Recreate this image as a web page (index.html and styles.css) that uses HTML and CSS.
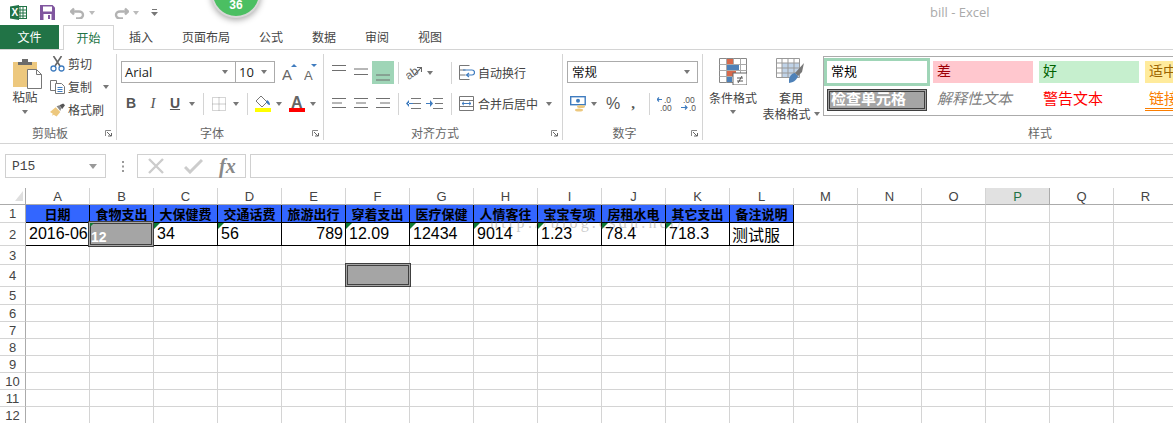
FILE: index.html
```html
<!DOCTYPE html>
<html lang="zh-CN">
<head>
<meta charset="utf-8">
<title>bill - Excel</title>
<link rel="stylesheet" href="styles.css">
</head>
<body>
<div class="app">
  <header class="titlebar">
    <svg class="qi-excel" width="17" height="15" viewBox="0 0 17 15"><rect x="6" y="1.500" width="10.500" height="12" fill="#fff" stroke="#217346"/><path d="M10 2v11M13 2v11M7 5h9M7 8h9M7 11h9" stroke="#217346"/><path d="M0 1.500 9 0v15L0 13.500z" fill="#217346"/><text x="1.500" y="11" class="qi-x">X</text></svg>
    <svg class="qi-save" width="15" height="15" viewBox="0 0 15 15"><path d="M0 0h12.500L15 2.500V15H0z" fill="#80569f"/><rect x="3" y="1.500" width="9" height="5" fill="#fff"/><rect x="3.500" y="9" width="8" height="6" fill="#fff"/><rect x="8" y="10" width="2" height="4" fill="#80569f"/></svg>
    <svg class="qi-undo" width="15" height="13" viewBox="0 0 15 13"><path d="M4 2.500 1 5.500l3 3M1.500 5.500H9a4 3.500 0 0 1 0 7H6" fill="none" stroke="#b3b3b3" stroke-width="2.400"/></svg>
    <i class="caret light qi-c1"></i>
    <svg class="qi-redo" width="15" height="13" viewBox="0 0 15 13"><path d="M11 2.500l3 3-3 3M13.500 5.500H6a4 3.500 0 0 0 0 7h3" fill="none" stroke="#b3b3b3" stroke-width="2.400"/></svg>
    <i class="caret light qi-c2"></i>
    <svg class="qi-more" width="7" height="8" viewBox="0 0 7 8"><path d="M1 .500h5" stroke="#777"/><path d="M0 3h7L3.500 7z" fill="#777"/></svg>
    <span class="doc-title">bill - Excel</span>
  </header>
  <div class="badge"><span>36</span></div>

  <nav class="tabs">
    <span class="tab-file">文件</span>
    <span class="tab-active">开始</span>
    <span class="tab first">插入</span>
    <span class="tab">页面布局</span>
    <span class="tab">公式</span>
    <span class="tab">数据</span>
    <span class="tab">审阅</span>
    <span class="tab">视图</span>
  </nav>

  <section class="ribbon">
    <div class="group g-clip">
      <div class="group-body clip-body">
        <div class="paste">
          <svg class="paste-ic" width="30" height="31" viewBox="0 0 30 31"><rect x="0" y="4" width="24" height="25" fill="#edc87e"/><path d="M5 4h14v3H5zM9 1h6v3H9z" fill="#6b6b6b"/><path d="M14.500 11.500h9l5 5v14h-14z" fill="#fff" stroke="#777"/><path d="M23.500 11.500v5h5" fill="none" stroke="#777"/></svg>
          <span class="paste-label">粘贴</span>
          <i class="caret paste-caret"></i>
        </div>
        <div class="clip-list">
          <div class="clip-item"><svg width="14" height="16" viewBox="0 0 14 16"><path d="M3 0l6.500 10M11 0 4.500 10" stroke="#666" stroke-width="1.600"/><circle cx="3" cy="12.500" r="2.500" fill="none" stroke="#3f7cbf" stroke-width="1.300"/><circle cx="11" cy="12.500" r="2.500" fill="none" stroke="#3f7cbf" stroke-width="1.300"/></svg><span>剪切</span></div>
          <div class="clip-item"><svg width="15" height="14" viewBox="0 0 15 14"><path d="M.5.500h6v10h-6z" fill="#fff" stroke="#777"/><path d="M5.500 3.500h6l3 3v7h-9z" fill="#fff" stroke="#777"/><path d="M7.500 7.500h5M7.500 9.500h5M7.500 11.500h5" stroke="#3f7cbf"/></svg><span>复制</span><i class="caret copy-caret"></i></div>
          <div class="clip-item"><svg width="16" height="14" viewBox="0 0 16 14"><path d="M0 9 6 4l5 5-4 5-3-2-2 1 1-2z" fill="#edc87e"/><path d="M7 3l3-1 2 3-1 3z" fill="#888"/><path d="M10 2l4-2 2 2-3 4z" fill="#555"/></svg><span>格式刷</span></div>
        </div>
      </div>
      <div class="group-label"><span>剪贴板</span><svg class="launcher" width="7" height="7" viewBox="0 0 7 7"><path d="M.5 6V.5H6" fill="none" stroke="#888"/><path d="M2 2l4 4M3 6h3.500V3" fill="none" stroke="#666"/></svg></div>
    </div>

    <div class="group g-font">
      <div class="group-body">
        <div class="row r-font-1">
          <div class="select sel-font"><span class="sel-text">Arial</span><i class="caret"></i></div>
          <div class="select sel-size"><span class="sel-text">10</span><i class="caret"></i></div>
          <svg class="grow" width="15" height="19" viewBox="0 0 15 19"><text x="0" y="17" class="fa big">A</text><path d="M9 4l3-3 3 3z" fill="#3f7cbf"/></svg>
          <svg class="shrink" width="13" height="19" viewBox="0 0 13 19"><text x="0" y="17" class="fa small">A</text><path d="M7 1h6l-3 3z" fill="#3f7cbf"/></svg>
        </div>
        <div class="row r-font-2">
          <span class="fmt fmt-b">B</span>
          <span class="fmt fmt-i">I</span>
          <span class="fmt fmt-u">U</span>
          <span class="slot-caret"><i class="caret"></i></span>
          <i class="sep s-a"></i>
          <span class="fmt s-border"><svg width="14" height="14" viewBox="0 0 14 14"><path d="M.5.500h13v13H.5z" fill="none" stroke="#aaa" stroke-dasharray="1 1"/><path d="M7 .5v13M.5 7h13" stroke="#999" stroke-dasharray="1 1"/></svg></span>
          <span class="slot-caret"><i class="caret"></i></span>
          <i class="sep s-b"></i>
          <svg class="s-fill" width="16" height="17" viewBox="0 0 16 17"><path d="M6 1l6 6-5 5-6-6z" fill="#fff" stroke="#777"/><path d="M12 5c2 1 3 3 3 5-2 0-3-2-4-3z" fill="#3f7cbf"/><rect y="13" width="16" height="4" fill="#ffff00"/></svg>
          <span class="slot-caret s-small"><i class="caret"></i></span>
          <svg class="s-color" width="16" height="17" viewBox="0 0 16 17"><text x="2" y="12.500" class="fa color">A</text><rect y="13" width="16" height="4" fill="#ff0000"/></svg>
          <span class="slot-caret s-small"><i class="caret"></i></span>
        </div>
      </div>
      <div class="group-label"><span>字体</span><svg class="launcher" width="7" height="7" viewBox="0 0 7 7"><path d="M.5 6V.5H6" fill="none" stroke="#888"/><path d="M2 2l4 4M3 6h3.500V3" fill="none" stroke="#666"/></svg></div>
    </div>

    <div class="group g-align">
      <div class="group-body">
        <div class="row r-tall">
          <svg class="al" width="22" height="23"><path d="M4 4.500h14M4 9.500h14"/></svg>
          <svg class="al" width="22" height="23"><path d="M4 8h14M4 13.500h14"/></svg>
          <svg class="al on" width="22" height="23"><path d="M4 14h14M4 19h14"/></svg>
          <i class="sep sep-al"></i>
          <svg class="orient" width="16" height="16" viewBox="0 0 16 16"><text x="0" y="13" class="ab" transform="rotate(-35 5 10)">ab</text><path d="M9 9l6-6M11 2.500h4.500V7" fill="none" stroke="#666" stroke-width="1.100"/></svg>
          <span class="slot-caret"><i class="caret"></i></span>
          <i class="sep sep-wrap"></i>
          <svg class="wrap-ic" width="16" height="15" viewBox="0 0 16 15"><path d="M.5.500h10M.5 14.500h10M.5 .5v14M.5 5h6M.5 10h6" fill="none" stroke="#777"/><path d="M4 5h9a2 2 0 0 1 0 5H8M10 8l-2.500 2L10 12" fill="none" stroke="#3f7cbf" stroke-width="1.200"/></svg>
          <span class="txt">自动换行</span>
        </div>
        <div class="row r-tall">
          <svg class="al" width="22" height="23"><path d="M4 6.500h14M4 11h10M4 15.500h14"/></svg>
          <svg class="al" width="22" height="23"><path d="M4 6.500h14M6 11h10M4 15.500h14"/></svg>
          <svg class="al" width="22" height="23"><path d="M4 6.500h14M8 11h10M4 15.500h14"/></svg>
          <i class="sep sep-al"></i>
          <svg class="indent" width="22" height="23"><path d="M9 6.500h10M11 11.500h8M9 16.500h10" stroke="#777"/><path d="M7 8l-3 3.500L7 15zM6 11h5v1H6z" fill="#3f7cbf"/></svg>
          <svg class="indent" width="22" height="23"><path d="M9 6.500h10M11 11.500h8M9 16.500h10" stroke="#777"/><path d="M6 8l3 3.500L6 15zM2 11h5v1H2z" fill="#3f7cbf"/></svg>
          <i class="sep sep-ind"></i>
          <svg class="wrap-ic" width="16" height="15" viewBox="0 0 16 15"><path d="M.5.500h14v14H.5zM.5 4.500h14M.5 10.500h14" fill="none" stroke="#777"/><path d="M3 7.500h9M5 5.800 3 7.500l2 1.700M10 5.800l2 1.700-2 1.700" fill="none" stroke="#3f7cbf"/></svg>
          <span class="txt">合并后居中</span>
          <i class="caret merge-caret"></i>
        </div>
      </div>
      <div class="group-label"><span>对齐方式</span><svg class="launcher" width="7" height="7" viewBox="0 0 7 7"><path d="M.5 6V.5H6" fill="none" stroke="#888"/><path d="M2 2l4 4M3 6h3.500V3" fill="none" stroke="#666"/></svg></div>
    </div>

    <div class="group g-num">
      <div class="group-body">
        <div class="row r-font-1">
          <div class="select sel-num"><span class="sel-text cjk">常规</span><i class="caret"></i></div>
        </div>
        <div class="row r-num-2">
          <svg class="n-cur" width="16" height="16" viewBox="0 0 16 16"><rect x=".7" y=".7" width="14.500" height="8" fill="#fff" stroke="#3f7cbf" stroke-width="1.400"/><circle cx="8" cy="4.700" r="2" fill="#3f7cbf"/><ellipse cx="11" cy="10.500" rx="4" ry="1.500" fill="#edc87e"/><ellipse cx="9" cy="14" rx="4" ry="1.500" fill="#edc87e"/></svg>
          <span class="slot-caret n-car"><i class="caret"></i></span>
          <span class="n-pct">%</span>
          <span class="n-com">,</span>
          <i class="sep n-sep"></i>
          <svg class="n-dec" width="16" height="16" viewBox="0 0 16 16"><text x="7" y="7" class="dec">.0</text><text x="3" y="15" class="dec">.00</text><path d="M5 3.500H0M2 1.500 0 3.500l2 2" fill="none" stroke="#3f7cbf" stroke-width="1.200"/></svg>
          <svg class="n-dec n-dec2" width="16" height="16" viewBox="0 0 16 16"><text x="3" y="7" class="dec">.00</text><text x="9" y="15" class="dec">.0</text><path d="M1 11.500h6M5 9.500l2 2-2 2" fill="none" stroke="#3f7cbf" stroke-width="1.200"/></svg>
        </div>
      </div>
      <div class="group-label"><span>数字</span><svg class="launcher" width="7" height="7" viewBox="0 0 7 7"><path d="M.5 6V.5H6" fill="none" stroke="#888"/><path d="M2 2l4 4M3 6h3.500V3" fill="none" stroke="#666"/></svg></div>
    </div>

    <div class="group g-styles">
      <div class="styles-body">
        <div class="big-btn">
          <svg width="28" height="27" viewBox="0 0 28 27"><path d="M.5.500h27v24H.5z" fill="#fff" stroke="#888"/><path d="M.5 6.500h27M.5 12.500h27M.5 18.500h27M7.500.5v24M14.500.5v24M21.500.5v24" stroke="#aaa"/><rect x="8" y="1" width="6" height="5" fill="#d7694b"/><rect x="8" y="7" width="12" height="5" fill="#4e81b8"/><rect x="8" y="13" width="9" height="5" fill="#d7694b"/><rect x="8" y="19" width="5" height="5" fill="#4e81b8"/><rect x="14" y="15" width="14" height="12" fill="#fff" stroke="#666"/><path d="M18 20h6M18 23h6M23 18l-4 7" stroke="#555"/></svg>
          <span class="big-text">条件格式</span>
          <i class="caret big-caret"></i>
        </div>
        <div class="big-btn">
          <svg width="30" height="27" viewBox="0 0 30 27"><rect x="6" y="5" width="17" height="15" fill="#c0d3e8"/><path d="M.5.500h23v19H.5zM.5 5h23M.5 10h23M.5 15h23M6 .5v19M12 .5v19M18 .5v19" fill="none" stroke="#999"/><path d="M13 21c1-4 4-6 6-6l3 3c-1 3-3 6-9 7z" fill="#4e81b8"/><path d="M19 15l9-10-2 9-4 4z" fill="#777"/></svg>
          <span class="big-text">套用</span>
          <span class="big-text tight">表格格式<i class="caret table-caret"></i></span>
        </div>
        <div class="gallery">
          <div class="gal-cell picked"><span class="st st-normal">常规</span></div>
          <div class="gal-cell"><span class="st st-bad">差</span></div>
          <div class="gal-cell"><span class="st st-good">好</span></div>
          <div class="gal-cell"><span class="st st-mid">适中</span></div>
          <div class="gal-cell"><span class="st st-check">检查单元格</span></div>
          <div class="gal-cell"><span class="st st-note">解释性文本</span></div>
          <div class="gal-cell"><span class="st st-warn">警告文本</span></div>
          <div class="gal-cell"><span class="st st-link">链接单元格</span></div>
        </div>
      </div>
      <div class="group-label solo"><span>样式</span></div>
    </div>
  </section>

  <section class="formula">
    <div class="namebox"><span>P15</span><i class="caret"></i></div>
    <svg class="dots" width="3" height="11" viewBox="0 0 3 11"><path d="M1 0v2M1 4.500v2M1 9v2" stroke="#999" stroke-width="2"/></svg>
    <div class="fx-box">
      <svg width="16" height="16" viewBox="0 0 16 16"><path d="M1 1l14 14M15 1 1 15" stroke="#ccc" stroke-width="2.400"/></svg>
      <svg width="19" height="16" viewBox="0 0 19 16"><path d="M1 9l5 5L18 2" fill="none" stroke="#ccc" stroke-width="3"/></svg>
      <span class="fx">fx</span>
    </div>
    <div class="fx-input"></div>
  </section>

  <section class="sheet">
    <table class="grid">
      <colgroup><col class="c-h"><col span="18" class="c-d"></colgroup>
      <thead>
        <tr class="h17"><th class="corner"><svg width="8" height="10" viewBox="0 0 8 10"><path d="M8 0v10H0z" fill="#dfdfdf"/></svg></th><th>A</th><th>B</th><th>C</th><th>D</th><th>E</th><th>F</th><th>G</th><th>H</th><th>I</th><th>J</th><th>K</th><th>L</th><th>M</th><th>N</th><th>O</th><th class="sel-col">P</th><th>Q</th><th>R</th></tr>
      </thead>
      <tbody>
        <tr class="h18"><th>1</th><td class="hd">日期</td><td class="hd">食物支出</td><td class="hd">大保健费</td><td class="hd">交通话费</td><td class="hd">旅游出行</td><td class="hd">穿着支出</td><td class="hd">医疗保健</td><td class="hd">人情客往</td><td class="hd">宝宝专项</td><td class="hd">房租水电</td><td class="hd">其它支出</td><td class="hd">备注说明</td><td></td><td></td><td></td><td></td><td></td><td></td></tr>
        <tr class="h23"><th>2</th><td class="v">2016-06</td><td class="v anchor"><div class="mark mark-b"><span>12</span></div></td><td class="v t">34</td><td class="v t">56</td><td class="v num">789</td><td class="v t">12.09</td><td class="v t">12434</td><td class="v t">9014</td><td class="v t">1.23</td><td class="v t">78.4</td><td class="v t">718.3</td><td class="v cjk">测试服</td><td></td><td></td><td></td><td></td><td></td><td></td></tr>
        <tr class="h19"><th>3</th><td></td><td></td><td></td><td></td><td></td><td></td><td></td><td></td><td></td><td></td><td></td><td></td><td></td><td></td><td></td><td></td><td></td><td></td></tr>
        <tr class="h22"><th>4</th><td></td><td></td><td></td><td></td><td></td><td class="anchor"><div class="mark mark-f"></div></td><td></td><td></td><td></td><td></td><td></td><td></td><td></td><td></td><td></td><td></td><td></td><td></td></tr>
        <tr class="h18"><th>5</th><td></td><td></td><td></td><td></td><td></td><td></td><td></td><td></td><td></td><td></td><td></td><td></td><td></td><td></td><td></td><td></td><td></td><td></td></tr>
        <tr class="h17"><th>6</th><td></td><td></td><td></td><td></td><td></td><td></td><td></td><td></td><td></td><td></td><td></td><td></td><td></td><td></td><td></td><td></td><td></td><td></td></tr>
        <tr class="h17"><th>7</th><td></td><td></td><td></td><td></td><td></td><td></td><td></td><td></td><td></td><td></td><td></td><td></td><td></td><td></td><td></td><td></td><td></td><td></td></tr>
        <tr class="h17"><th>8</th><td></td><td></td><td></td><td></td><td></td><td></td><td></td><td></td><td></td><td></td><td></td><td></td><td></td><td></td><td></td><td></td><td></td><td></td></tr>
        <tr class="h17"><th>9</th><td></td><td></td><td></td><td></td><td></td><td></td><td></td><td></td><td></td><td></td><td></td><td></td><td></td><td></td><td></td><td></td><td></td><td></td></tr>
        <tr class="h17"><th>10</th><td></td><td></td><td></td><td></td><td></td><td></td><td></td><td></td><td></td><td></td><td></td><td></td><td></td><td></td><td></td><td></td><td></td><td></td></tr>
        <tr class="h17"><th>11</th><td></td><td></td><td></td><td></td><td></td><td></td><td></td><td></td><td></td><td></td><td></td><td></td><td></td><td></td><td></td><td></td><td></td><td></td></tr>
        <tr class="h17"><th>12</th><td></td><td></td><td></td><td></td><td></td><td></td><td></td><td></td><td></td><td></td><td></td><td></td><td></td><td></td><td></td><td></td><td></td><td></td></tr>
      </tbody>
    </table>
    <div class="watermark">http://blog.csdn.net/</div>
  </section>
</div>
</body>
</html>
```
FILE: styles.css
```css
* { box-sizing: border-box; }
html, body { margin: 0; padding: 0; background: #fff; overflow: hidden; }
body { font-family: "Noto Sans CJK SC", "Liberation Sans", sans-serif; font-size: 12px; color: #444; }
.app { position: relative; width: 1173px; height: 423px; overflow: hidden; }
i { display: block; font-style: normal; }
svg { display: block; flex: none; }

.caret { width: 0; height: 0; border-left: 3.5px solid transparent; border-right: 3.5px solid transparent; border-top: 4px solid #777; flex: none; }
.caret.light { border-top-color: #bbb; }

/* title bar */
.titlebar { display: flex; align-items: center; height: 25px; padding-left: 10px; }
.qi-x { font: bold 10px "Liberation Sans", sans-serif; fill: #fff; }
.qi-save { margin-left: 13px; }
.qi-undo { margin-left: 15px; }
.qi-c1 { margin-left: 4px; }
.qi-redo { margin-left: 19px; }
.qi-c2 { margin-left: 4px; }
.qi-more { margin-left: 12px; }
.doc-title { margin-left: 772px; font: 13px/1 "Open Sans", sans-serif; color: #aaa; }
.badge { position: absolute; left: 211px; top: -32px; width: 50px; height: 50px; border-radius: 50%; background: #4bbf62; border: 2px solid #d8d8d8; box-shadow: 0 2px 6px rgba(0,0,0,.35); display: flex; align-items: flex-end; justify-content: center; padding-bottom: 4px; }
.badge span { font: bold 12px/14px "Liberation Sans", sans-serif; color: #fff; }

/* tabs */
.tabs { display: flex; height: 25px; border-bottom: 1px solid #d4d4d4; align-items: stretch; line-height: 24px; }
.tab-file { width: 59px; background: #217346; color: #fff; text-align: center; }
.tab-active { width: 51px; margin-left: 4px; height: 25px; background: #fff; color: #217346; text-align: center; border: 1px solid #d4d4d4; border-bottom: 0; }
.tab { margin-left: 29px; }
.tab.first { margin-left: 15px; }

/* ribbon */
.ribbon { display: flex; height: 94px; padding-top: 4px; border-bottom: 1px solid #d4d4d4; overflow: hidden; }
.group { height: 86px; display: flex; flex-direction: column; flex: none; border-right: 1px solid #d4d4d4; }
.group-body { flex: 1; padding-top: 7px; display: flex; flex-direction: column; gap: 8px; min-height: 0; }
.group-label { height: 14px; margin-bottom: 0; display: flex; align-items: center; line-height: 14px; color: #666; }
.group-label span { flex: 1; text-align: center; }
.launcher { width: 7px; margin: 0 4px 0 5px; }
.g-clip { width: 117px; }
.g-font { width: 207px; }
.g-align { width: 239px; }
.g-num { width: 140px; }
.g-styles { width: 674px; border-right: 0; }
.sep { width: 1px; height: 22px; background: #d4d4d4; flex: none; }
.row { display: flex; align-items: center; }
.r-tall { height: 23px; padding-left: 4px; }

/* clipboard */
.clip-body { flex-direction: row; gap: 1px; padding-top: 4px; }
.paste { width: 49px; padding-left: 1px; display: flex; flex-direction: column; align-items: center; }
.paste-ic { margin-left: 5px; }
.paste-label { font-size: 12.500px; line-height: 16px; margin-top: 0; color: #444; }
.paste-caret { margin-top: 5px; }
.clip-list { margin-top: -6px; display: flex; flex-direction: column; }
.clip-item { height: 23px; display: flex; align-items: center; gap: 3px; }
.clip-item svg { width: 15px; }
.copy-caret { margin-left: 8px; }

/* font */
.g-font .group-body { padding-left: 3px; }
.r-font-1 { height: 23px; padding-bottom: 1px; }
.select { height: 22px; border: 1px solid #ababab; display: flex; align-items: center; justify-content: space-between; padding: 0 7px 0 3px; background: #fff; }
.sel-font { width: 115px; margin-left: 1px; }
.sel-size { width: 40px; margin-left: -1px; }
.sel-text { font: 13px/1 "Open Sans", sans-serif; color: #222; }
.sel-text.cjk { font: 12.500px/1 "Noto Sans CJK SC", sans-serif; color: #111; }
.grow { margin-left: 7px; }
.shrink { margin-left: 7px; }
.fa { font-family: "Liberation Sans", sans-serif; fill: #666; }
.fa.big { font-size: 15px; }
.fa.small { font-size: 13px; }
.fa.color { font-size: 16px; font-weight: bold; fill: #666; }
.r-font-2 { height: 23px; }
.fmt { width: 22px; text-align: center; font: 14px/23px "Liberation Sans", sans-serif; color: #555; display: flex; justify-content: center; align-items: center; }
.fmt-b { font-weight: bold; }
.fmt-i { font-family: "Liberation Serif", serif; font-style: italic; font-size: 15px; }
.fmt-u { text-decoration: underline; font-weight: bold; }
.slot-caret { width: 12px; display: flex; justify-content: center; flex: none; }
.s-a { margin-left: 5px; }
.s-border { margin-left: 4px; }
.s-b { margin-left: 5px; }
.s-fill { margin-left: 7px; }
.s-small { width: 10px; margin-left: 3px; }
.s-color { margin-left: 5px; }

/* alignment */
.al { stroke: #6f6f6f; flex: none; }
.al.on { background: #9fd5b7; }
.sep-al { margin-left: 4px; margin-right: 3px; }
.orient { margin-left: 4px; margin-right: 2px; }
.ab { font: 12px "Liberation Sans", sans-serif; fill: #666; }
.sep-wrap { margin-left: 15px; }
.sep-ind { margin-left: 5px; }
.wrap-ic { margin-left: 7px; margin-right: 3px; }
.txt { line-height: 16px; color: #444; }
.merge-caret { margin-left: 8px; }

/* number */
.g-num .group-body { padding-left: 4px; }
.sel-num { width: 131px; padding-left: 4px; }
.r-num-2 { height: 23px; }
.n-cur { margin-left: 3px; }
.n-car { width: 8px; margin-left: 4px; }
.n-pct { width: 14px; margin-left: 8px; font: 16px/1 "Liberation Sans", sans-serif; color: #555; text-align: center; }
.n-com { width: 14px; margin-left: 6px; font: bold 15px/1 "Liberation Serif", serif; color: #555; text-align: center; }
.n-sep { margin-left: 9px; }
.n-dec { margin-left: 7px; }
.dec { font: 8.500px "Liberation Sans", sans-serif; fill: #555; }

/* styles */
.styles-body { flex: 1; display: flex; padding-left: 1px; min-height: 0; }
.big-btn { width: 58px; padding-top: 4px; display: flex; flex-direction: column; align-items: center; flex: none; }
.big-btn svg + .big-text { margin-top: 5px; }
.big-text { line-height: 16px; color: #444; white-space: nowrap; }
.big-caret { margin-top: 4px; }
.tight { display: flex; align-items: center; }
.table-caret { margin-left: 3px; }
.gallery { margin: 2px 0 0 3px; width: 600px; height: 60px; border: 1px solid #ababab; padding: 1px 0; display: grid; grid-template-columns: repeat(4, 106px); grid-template-rows: 28px 28px; }
.gal-cell { padding: 3px; }
.gal-cell.picked { border: 3px solid #9fd5b7; padding: 0; }
.st { display: block; height: 22px; padding-left: 4px; line-height: 19px; font-size: 14px; white-space: nowrap; overflow: hidden; }
.st-normal { font-size: 13px; color: #000; }
.st-bad { background: #ffc7ce; color: #9c0006; }
.st-good { background: #c6efce; color: #006100; }
.st-mid { background: #ffeb9c; color: #9c6500; }
.st-check { background: #a5a5a5; color: #fff; font-weight: bold; font-size: 15px; border: 3px double #3f3f3f; padding-left: 1px; line-height: 12px; }
.st-note { color: #7f7f7f; font-style: italic; font-size: 15px; line-height: 17px; }
.st-warn { color: #ff0000; font-size: 15px; line-height: 17px; }
.st-link { color: #fa7d00; border-bottom: 3px double #fa7d00; font-size: 15px; line-height: 17px; }

/* formula bar */
.formula { display: flex; align-items: center; height: 24px; margin-top: 10px; padding-left: 5px; }
.namebox { width: 101px; height: 24px; border: 1px solid #d0d0d0; display: flex; align-items: center; justify-content: space-between; padding: 0 8px 0 6px; font: 13px/1 "Liberation Mono", monospace; color: #444; }
.namebox .caret { border-left-width: 4px; border-right-width: 4px; border-top: 5px solid #999; }
.dots { margin-left: 16px; }
.fx-box { margin-left: 12px; width: 109px; height: 24px; border: 1px solid #d0d0d0; display: flex; align-items: center; padding-left: 10px; }
.fx-box svg + svg { margin-left: 20px; }
.fx { margin-left: 16px; font: italic bold 20px/1 "Liberation Serif", serif; color: #888; }
.fx-input { flex: 1; margin-left: 4px; height: 24px; border: 1px solid #d0d0d0; border-right: 0; }

/* sheet */
.sheet { position: relative; margin-top: 10px; }
.grid { border-collapse: separate; border-spacing: 0; table-layout: fixed; width: 1178px; }
.c-h { width: 26px; }
.c-d { width: 64px; }
.h17 > * { height: 17px; }
.h18 > * { height: 18px; }
.h19 > * { height: 19px; }
.h22 > * { height: 22px; }
.h23 > * { height: 23px; }
.grid th, .grid td { padding: 0; border-right: 1px solid #d4d4d4; border-bottom: 1px solid #d4d4d4; white-space: nowrap; overflow: hidden; line-height: 1; }
.grid th { font: 13px/1 "Liberation Sans", sans-serif; color: #444; background: #fff; }
.grid tbody th { border-right-color: #ababab; }
.grid thead th { border-bottom-color: #ababab; }
.grid thead th.corner { border-right-color: #ababab; }
.corner svg { margin: 0 0 0 15px; }
.grid th.sel-col { background: #e1e1e1; color: #217346; border-right-color: #ababab; }
.grid td.hd { background: #3366ff; color: #000; font-weight: bold; font-size: 13px; text-align: center; border-color: #000; }
.grid td.v { font: 16px/1 "Liberation Sans", sans-serif; color: #000; padding-left: 3px; border-color: #000; }
.grid td.num { text-align: right; padding: 0 2px 0 0; }
.grid td.cjk { font-family: "Noto Sans CJK SC", sans-serif; font-size: 16px; padding-left: 2px; }
.grid td.t, .grid td.anchor { position: relative; overflow: visible; }
.grid td.t::before { content: ""; position: absolute; left: 0; top: 0; border-top: 6px solid #0e7a35; border-right: 6px solid transparent; }
.mark { position: absolute; background: #a5a5a5; border: 3px double #404040; z-index: 2; }
.mark-b { left: -2px; right: -1px; top: -2px; bottom: -2px; }
.mark-b::before { content: ""; position: absolute; left: -1px; top: -1px; border-top: 4px solid #0e7a35; border-right: 4px solid transparent; }
.mark-b span { position: absolute; left: 0; top: 6px; font: bold 14px/1 "Liberation Sans", sans-serif; color: #fff; }
.mark-f { left: -1px; right: -2px; top: -2px; bottom: -1px; }
.watermark { position: absolute; left: 490px; top: 27px; font: 16px/1 "Liberation Serif", serif; letter-spacing: 3.200px; color: rgba(120,120,120,.4); pointer-events: none; z-index: 3; white-space: nowrap; }
```
